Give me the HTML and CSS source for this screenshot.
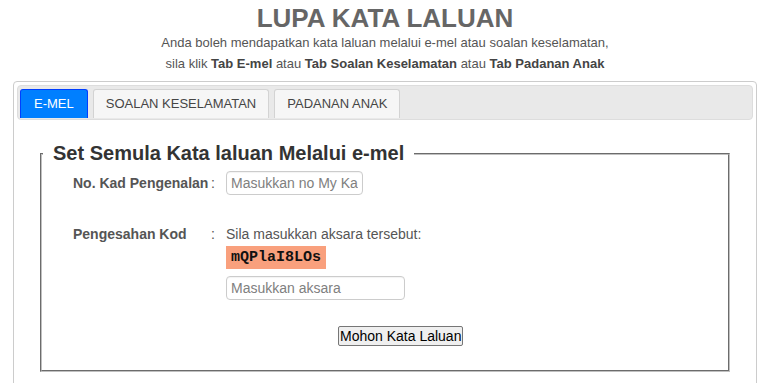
FILE: index.html
```html
<!DOCTYPE html>
<html lang="ms">
<head>
  <meta charset="UTF-8" />
  <meta name="viewport" content="width=device-width, initial-scale=1.0"/>
  <title>Lupa Kata Laluan</title>
  <link rel="stylesheet" href="styles.css">
</head>
<body>

  <div class="header">
    <h1>LUPA KATA LALUAN</h1>
    <p>Anda boleh mendapatkan kata laluan melalui e-mel atau soalan keselamatan,</p>
    <p>sila klik <b>Tab E-mel</b> atau <b>Tab Soalan Keselamatan</b> atau <b>Tab Padanan Anak</b></p>
  </div>

  <div class="panel">
    <div class="tabs">
      <div class="tab active">E-MEL</div>
      <div class="tab">SOALAN KESELAMATAN</div>
      <div class="tab">PADANAN ANAK</div>
    </div>

    <div class="tab-body">
      <fieldset class="box">
        <legend>Set Semula Kata laluan Melalui e-mel</legend>

        <div class="form-row row-ic">
          <div class="label">No. Kad Pengenalan</div>
          <div class="colon">:</div>
          <div class="value">
            <input type="text" class="ic-input" placeholder="Masukkan no My Kad">
          </div>
        </div>

        <div class="form-row row-code">
          <div class="label">Pengesahan Kod</div>
          <div class="colon">:</div>
          <div class="value">
            <div class="hint">Sila masukkan aksara tersebut:</div>
            <div class="captcha">mQPlaI8LOs</div>
            <input type="text" class="code-input" placeholder="Masukkan aksara">
          </div>
        </div>

        <div class="actions">
          <button type="button">Mohon Kata Laluan</button>
        </div>
      </fieldset>
    </div>
  </div>

</body>
</html>
```

FILE: styles.css
```css
body {
  margin: 0;
  font-family: "Liberation Sans", Arial, sans-serif;
  background: #fff;
  color: #555;
}

.header {
  text-align: center;
  padding-top: 4px;
}

.header h1 {
  margin: 0;
  font-size: 26px;
  line-height: 28px;
  color: #666;
}

.header p {
  margin: 0;
  font-size: 13px;
  line-height: 21px;
  color: #555;
}

.header p b {
  color: #444;
}

.panel {
  margin: 7px 13px 0;
  border: 1px solid #ccc;
  border-radius: 4px;
  padding: 3px;
  height: 400px;
}

.tabs {
  display: flex;
  gap: 5px;
  background: #e9e9e9;
  border: 1px solid #ddd;
  border-radius: 4px;
  padding: 3px 2px 0;
  height: 30px;
}

.tab {
  height: 28px;
  line-height: 28px;
  padding: 0 12px;
  border: 1px solid #d3d3d3;
  border-bottom: 0;
  border-radius: 3px 3px 0 0;
  background: #f6f6f6;
  font-size: 13px;
  color: #454545;
}

.tab.active {
  background: #007fff;
  border-color: #003eff;
  color: #fff;
  padding: 0 13px;
}

.tab-body {
  padding: 22px 23px 0;
}

.box {
  margin: 0;
  padding: 0 0 24px;
  border: 2px groove #c0c0c0;
}

.box legend {
  margin-left: 1px;
  padding: 0 10px;
  font-size: 20px;
  font-weight: bold;
  color: #333;
}

.form-row {
  display: grid;
  grid-template-columns: 138px 15px 1fr;
  padding-left: 31px;
  font-size: 14px;
}

.label {
  font-weight: bold;
  color: #555;
}

.colon {
  color: #555;
}

.row-ic {
  margin-top: 6px;
  align-items: center;
}

.row-code {
  margin-top: 31px;
}

.hint {
  font-size: 14px;
  line-height: 16px;
  color: #555;
}

.captcha {
  display: inline-block;
  margin-top: 4px;
  padding: 0 5px;
  width: 90px;
  height: 23px;
  line-height: 23px;
  background: #f9a07d;
  color: #111;
  font-family: "Liberation Mono", "Courier New", monospace;
  font-weight: bold;
  font-size: 15px;
}

.value input {
  display: block;
  box-sizing: border-box;
  border: 1px solid #ccc;
  border-radius: 4px;
  padding: 0 4px;
  font-family: "Liberation Sans", Arial, sans-serif;
  font-size: 14px;
  color: #555;
  box-shadow: inset 0 1px 1px rgba(0,0,0,0.05);
}

.value input::placeholder {
  color: #808080;
}

.ic-input {
  width: 137px;
  height: 24px;
}

.code-input {
  margin-top: 7px;
  width: 179px;
  height: 24px;
}

.actions {
  padding: 26px 0 0 296px;
}

.actions button {
  height: 20px;
  padding: 0 1px;
  font-family: "Liberation Sans", Arial, sans-serif;
  font-size: 14px;
  color: #000;
  background: #efefef;
  border: 1px solid #767676;
  border-radius: 2px;
}
```
